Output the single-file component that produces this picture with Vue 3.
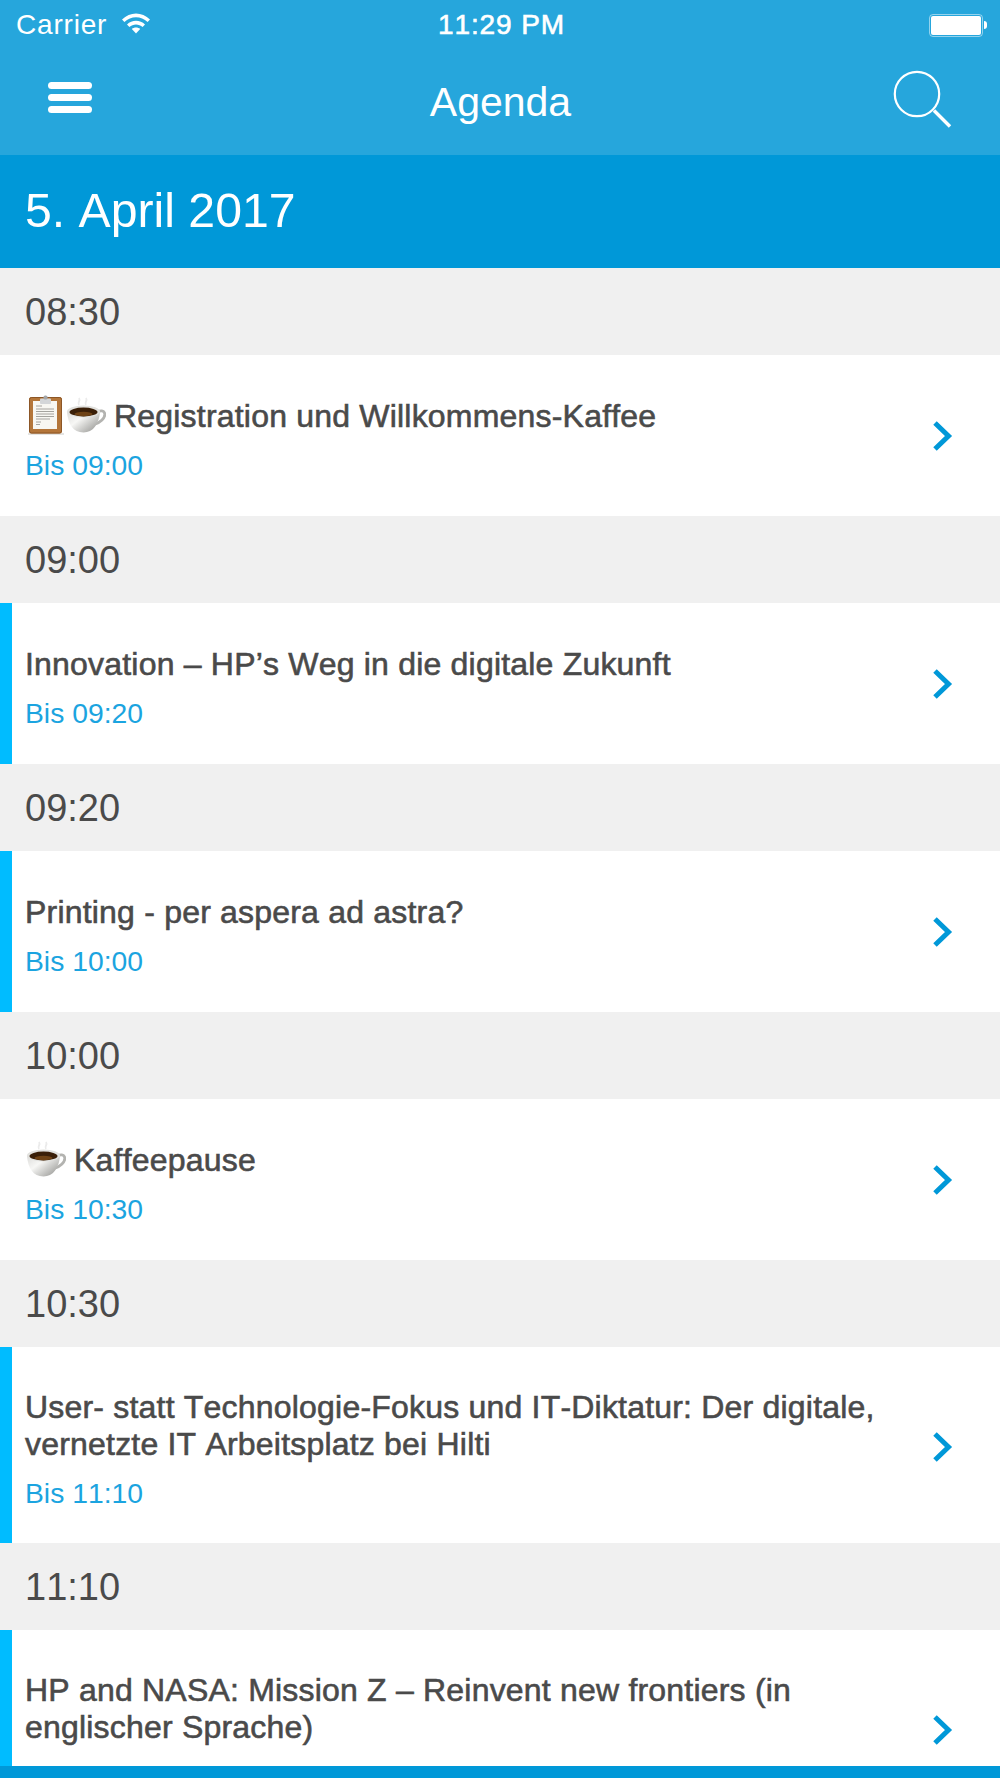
<template>
  <div class="screen">
    <header class="topbar">
      <div class="status">
        <div class="status-left">
          <span>Carrier</span>
          <svg class="wifi" viewBox="0 0 30 22" width="30" height="22">
            <path d="M1 7.5C9 -0.5 21 -0.5 29 7.5L26.6 10C20 3.6 10 3.6 3.4 10Z" fill="#fff" />
            <path d="M6 12.5C11 7.6 19 7.6 24 12.5L21.6 15C18 11.6 12 11.6 8.4 15Z" fill="#fff" />
            <path d="M10.8 17C13 15 17 15 19.2 17L15 21.5Z" fill="#fff" />
          </svg>
        </div>
        <span class="clock">11:29 PM</span>
        <div class="status-right">
          <div class="battery"><div class="battery-fill"></div></div>
          <div class="battery-tip"></div>
        </div>
      </div>
      <div class="nav">
        <div class="burger">
          <span></span>
          <span></span>
          <span></span>
        </div>
        <h1>Agenda</h1>
        <svg class="search" viewBox="0 0 60 60" width="60" height="60">
          <circle cx="24" cy="24" r="22.2" fill="none" stroke="#fff" stroke-width="2.2" />
          <path d="M41 40.5L57 56.5" stroke="#fff" stroke-width="3.4" fill="none" />
        </svg>
      </div>
    </header>

    <div class="date-bar">5. April 2017</div>

    <div class="list">
      <template v-for="slot in slots" :key="slot.time">
        <div class="time-row">{{ slot.time }}</div>
        <div class="item" :class="{ talk: slot.talk, tall: slot.lines.length > 1 }">
          <div class="item-body">
            <div class="title">
              <svg v-if="slot.board" class="emoji" viewBox="0 0 40 40" width="40" height="40">
                <rect x="3" y="38" width="36" height="2" fill="#e4e4e2" />
                <rect x="4" y="2" width="33" height="36.5" rx="2.5" fill="#b4763a" />
                <rect x="4.5" y="2.5" width="32" height="35.5" rx="2" fill="none" stroke="#8c5626" stroke-width="1" />
                <rect x="8" y="6" width="24" height="28" fill="#f8f7f2" />
                <path d="M11 11h6M11 14h18M11 16.5h18M11 19h18M11 21.5h18M11 24h14M11 27h5M11 29.5h4" stroke="#8f8e88" stroke-width="0.8" />
                <rect x="15" y="3.5" width="11" height="5.5" rx="1" fill="#d4d6d8" />
                <rect x="18.5" y="0.5" width="4" height="4" rx="1.6" fill="#a3a6a9" />
              </svg>
              <svg v-if="slot.cup" class="emoji cup" viewBox="0 0 41 40" width="41" height="40">
                <defs>
                  <linearGradient id="cupBody" x1="0" y1="0" x2="1" y2="0.8">
                    <stop offset="0" stop-color="#dcdcda" />
                    <stop offset="0.4" stop-color="#f7f7f5" />
                    <stop offset="1" stop-color="#9a9a97" />
                  </linearGradient>
                </defs>
                <path d="M14 10C12 7 16 6 14 3M21 10C19 7 23 6 21 3" stroke="#ebebeb" stroke-width="1.8" fill="none" />
                <path d="M32 17C40 13 42 20 37 25C35 27 32 29 28 30" stroke="#b3b3b0" stroke-width="2.8" fill="none" />
                <path d="M2 17C3 29 8 37.5 18.5 37.5C28 37.5 34 29 35 17Z" fill="url(#cupBody)" />
                <ellipse cx="18.5" cy="16.5" rx="16.5" ry="6" fill="#e2e2df" />
                <ellipse cx="18.5" cy="17" rx="14" ry="4.4" fill="#3a1f08" />
                <ellipse cx="18.5" cy="19" rx="9" ry="2.2" fill="#6e4215" />
              </svg>
              <template v-for="(line, i) in slot.lines" :key="i">
                <span>{{ line }}</span><br v-if="i < slot.lines.length - 1" />
              </template>
            </div>
            <div class="until">Bis {{ slot.until }}</div>
          </div>
          <svg class="chevron" viewBox="0 0 20 32" width="20" height="32">
            <path d="M2 3L15.5 16L2 29" fill="none" stroke="#0098d8" stroke-width="5" />
          </svg>
        </div>
      </template>
    </div>

    <div class="bottom-bar"></div>
  </div>
</template>

<script setup>
const slots = [
  { time: '08:30', until: '09:00', board: true, cup: true, lines: ['Registration und Willkommens-Kaffee'] },
  { time: '09:00', until: '09:20', talk: true, lines: ['Innovation – HP’s Weg in die digitale Zukunft'] },
  { time: '09:20', until: '10:00', talk: true, lines: ['Printing - per aspera ad astra?'] },
  { time: '10:00', until: '10:30', cup: true, lines: ['Kaffeepause'] },
  {
    time: '10:30',
    until: '11:10',
    talk: true,
    lines: ['User- statt Technologie-Fokus und IT-Diktatur: Der digitale,', 'vernetzte IT Arbeitsplatz bei Hilti']
  },
  {
    time: '11:10',
    until: '11:50',
    talk: true,
    lines: ['HP and NASA: Mission Z – Reinvent new frontiers (in', 'englischer Sprache)']
  }
]
</script>

<style>
html,
body {
  margin: 0;
  background: #fff;
}
</style>

<style scoped>
.screen {
  width: 1000px;
  height: 1778px;
  display: flex;
  flex-direction: column;
  overflow: hidden;
  font-family: "Liberation Sans", Arial, sans-serif;
  font-kerning: none;
  background: #fff;
}

.topbar {
  height: 155px;
  flex: none;
  background: #26a6dc;
  color: #fff;
}

.status {
  height: 50px;
  display: grid;
  grid-template-columns: 1fr auto 1fr;
  align-items: center;
  padding: 0 13px 0 16px;
  font-size: 28px;
  letter-spacing: 0.8px;
}

.status-left {
  display: flex;
  align-items: center;
  gap: 14px;
}

.wifi {
  margin-top: -4px;
}

.clock {
  letter-spacing: 0.9px;
  -webkit-text-stroke: 0.6px #fff;
}

.status-right {
  display: flex;
  justify-content: flex-end;
  align-items: center;
  gap: 1px;
}

.battery {
  width: 54px;
  height: 23px;
  box-sizing: border-box;
  padding: 1px;
  border: 1px solid rgba(255, 255, 255, 0.5);
  border-radius: 4px;
}

.battery-fill {
  height: 100%;
  background: #fff;
  border-radius: 2px;
}

.battery-tip {
  width: 3px;
  height: 8px;
  background: #fff;
  border-radius: 0 4px 4px 0;
}

.nav {
  height: 105px;
  display: grid;
  grid-template-columns: 1fr auto 1fr;
  align-items: center;
  padding: 0 47px 0 48px;
}

.burger {
  width: 44px;
  display: flex;
  flex-direction: column;
  gap: 5px;
  margin-top: -11px;
}

.burger span {
  height: 7px;
  background: #fff;
  border-radius: 4px;
}

.nav h1 {
  margin: 0;
  font-size: 41px;
  font-weight: 400;
}

.search {
  justify-self: end;
  margin-top: -5px;
}

.date-bar {
  height: 113px;
  flex: none;
  box-sizing: border-box;
  padding: 27px 25px 0;
  background: #0098d8;
  color: #fff;
  font-size: 48.2px;
  line-height: 56px;
}

.list {
  flex: 1;
  min-height: 0;
  overflow: hidden;
}

.time-row {
  height: 87px;
  box-sizing: border-box;
  padding: 3px 0 0 25px;
  background: #f0f0f0;
  color: #4a4a4a;
  font-size: 38px;
  line-height: 83px;
}

.item {
  height: 161px;
  box-sizing: border-box;
  display: flex;
  align-items: center;
  justify-content: space-between;
  padding: 0 47px 0 25px;
  background: #fff;
}

.item.talk {
  border-left: 12px solid #00bcff;
  padding-left: 13px;
}

.item.tall {
  height: 196px;
}

.item-body {
  padding-top: 9px;
}

.title {
  color: #4a4a4a;
  font-size: 32px;
  line-height: 37px;
  letter-spacing: 0.2px;
  -webkit-text-stroke: 0.6px #4a4a4a;
}

.emoji {
  vertical-align: -8px;
  margin-top: -4px;
}

.cup {
  margin-right: 8px;
}

.until {
  margin-top: 13px;
  color: #1ba4e0;
  font-size: 28.3px;
  line-height: 34px;
}

.chevron {
  flex: none;
}

.tall .chevron {
  margin-top: 4px;
}

.bottom-bar {
  height: 12px;
  flex: none;
  background: #0098d8;
}
</style>
